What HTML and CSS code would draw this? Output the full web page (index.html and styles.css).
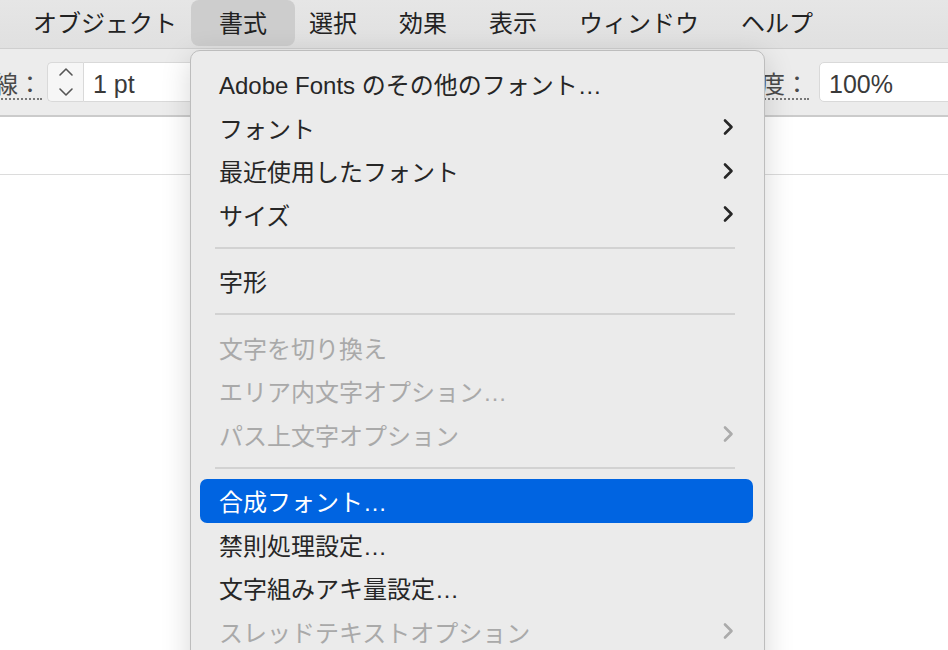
FILE: index.html
```html
<!DOCTYPE html>
<html lang="ja">
<head>
<meta charset="utf-8">
<title>書式メニュー</title>
<link rel="stylesheet" href="styles.css">
</head>
<body>
<div class="app">
  <nav class="menubar">
    <span class="mb-item">オブジェクト</span>
    <span class="mb-item active">書式</span>
    <span class="mb-item">選択</span>
    <span class="mb-item">効果</span>
    <span class="mb-item">表示</span>
    <span class="mb-item">ウィンドウ</span>
    <span class="mb-item">ヘルプ</span>
  </nav>
  <div class="toolbar">
    <div class="group left">
      <span class="label">線：</span>
      <div class="spinner">
        <svg width="16" height="30" viewBox="0 0 16 30"><path d="M2 8 L8 2 L14 8" fill="none" stroke="#555" stroke-width="1.6" stroke-linecap="round" stroke-linejoin="round"/><path d="M2 22 L8 28 L14 22" fill="none" stroke="#555" stroke-width="1.6" stroke-linecap="round" stroke-linejoin="round"/></svg>
      </div>
      <div class="field wide">1 pt</div>
    </div>
    <div class="group right">
      <span class="label">明度：</span>
      <div class="field opacity">100%</div>
    </div>
  </div>
  <div class="canvas">
    <div class="strip"></div>
  </div>
</div>

<div class="menu">
  <div class="item">Adobe Fonts のその他のフォント…</div>
  <div class="item sub">フォント<svg class="chev" width="12" height="18" viewBox="0 0 12 18"><path d="M3 2.5 L9.5 9 L3 15.5" fill="none" stroke="currentColor" stroke-width="2.6" stroke-linecap="round" stroke-linejoin="round"/></svg></div>
  <div class="item sub">最近使用したフォント<svg class="chev" width="12" height="18" viewBox="0 0 12 18"><path d="M3 2.5 L9.5 9 L3 15.5" fill="none" stroke="currentColor" stroke-width="2.6" stroke-linecap="round" stroke-linejoin="round"/></svg></div>
  <div class="item sub">サイズ<svg class="chev" width="12" height="18" viewBox="0 0 12 18"><path d="M3 2.5 L9.5 9 L3 15.5" fill="none" stroke="currentColor" stroke-width="2.6" stroke-linecap="round" stroke-linejoin="round"/></svg></div>
  <div class="sep"></div>
  <div class="item">字形</div>
  <div class="sep"></div>
  <div class="item disabled">文字を切り換え</div>
  <div class="item disabled">エリア内文字オプション…</div>
  <div class="item disabled sub">パス上文字オプション<svg class="chev" width="12" height="18" viewBox="0 0 12 18"><path d="M3 2.5 L9.5 9 L3 15.5" fill="none" stroke="currentColor" stroke-width="2.6" stroke-linecap="round" stroke-linejoin="round"/></svg></div>
  <div class="sep"></div>
  <div class="item selected">合成フォント…</div>
  <div class="item">禁則処理設定…</div>
  <div class="item">文字組みアキ量設定…</div>
  <div class="item disabled sub">スレッドテキストオプション<svg class="chev" width="12" height="18" viewBox="0 0 12 18"><path d="M3 2.5 L9.5 9 L3 15.5" fill="none" stroke="currentColor" stroke-width="2.6" stroke-linecap="round" stroke-linejoin="round"/></svg></div>
</div>
</body>
</html>
```
FILE: styles.css
```css
* { box-sizing: border-box; }
html, body { margin: 0; padding: 0; }
body {
  width: 948px;
  height: 650px;
  overflow: hidden;
  background: #fff;
  font-family: "Liberation Sans", "Noto Sans CJK JP", sans-serif;
  color: #262626;
  position: relative;
}
.app { display: flex; flex-direction: column; height: 650px; }

.menubar {
  height: 49px;
  background: linear-gradient(#e6e6e6, #e0e0e0);
  border-bottom: 1px solid #cfcfcf;
  display: flex;
  align-items: flex-start;
  padding-left: 12px;
  font-family: "Noto Sans CJK JP", sans-serif;
  font-size: 24px;
  color: #222;
}
.mb-item {
  height: 46px;
  line-height: 44px;
  padding: 0 28px;
  margin: 0 -7px;
  border-radius: 8px;
  white-space: nowrap;
}
.mb-item.active { background: #cdcdcd; }

.toolbar {
  height: 68px;
  background: #ececec;
  border-bottom: 2px solid #cbcbcb;
  display: flex;
  align-items: center;
  justify-content: space-between;
}
.group { display: flex; align-items: center; }
.label {
  font-family: "Noto Sans CJK JP", sans-serif;
  font-size: 24px;
  color: #4a4a4a;
  line-height: 30px;
  padding-top: 4px;
  border-bottom: 2px dotted #777;
  white-space: nowrap;
}
.left .label { margin-left: -6px; margin-right: 5px; }
.spinner {
  width: 36px;
  height: 40px;
  background: #f6f6f6;
  border: 1px solid #d9d9d9;
  border-right: none;
  border-radius: 5px 0 0 5px;
  display: flex;
  align-items: center;
  justify-content: center;
}
.field {
  height: 40px;
  background: #fff;
  border: 1px solid #d9d9d9;
  font-size: 25px;
  color: #3a3a3a;
  display: flex;
  align-items: center;
  padding: 5px 0 0 9px;
}
.field.wide { width: 180px; border-radius: 0 5px 5px 0; }
.right .label { margin-right: 10px; }
.field.opacity { width: 160px; margin-right: -31px; border-radius: 5px; }

.canvas { flex: 1; background: #fff; padding-top: 57px; }
.strip { height: 1px; background: #dcdcdc; }

.menu {
  position: absolute;
  left: 190px;
  top: 50px;
  width: 575px;
  height: 660px;
  background: #ebebeb;
  border: 1px solid #bdbdbd;
  border-radius: 10px;
  box-shadow: 0 8px 30px rgba(0,0,0,0.16);
  padding: 11px 11px 0 9px;
  font-size: 24px;
}
.item {
  height: 43.5px;
  display: flex;
  align-items: center;
  justify-content: space-between;
  padding: 0 19px;
  border-radius: 7px;
  white-space: nowrap;
  color: #262626;
}
.item.disabled { color: #a9a9a9; }
.item.selected { background: #0064e1; color: #fff; }
.chev { color: #262626; }
.item.disabled .chev { color: #ababab; }
.sep {
  height: 23px;
  display: flex;
  align-items: center;
  padding: 0 18px 0 15px;
}
.sep::before {
  content: "";
  flex: 1;
  height: 2px;
  background: #d2d2d2;
}
```
